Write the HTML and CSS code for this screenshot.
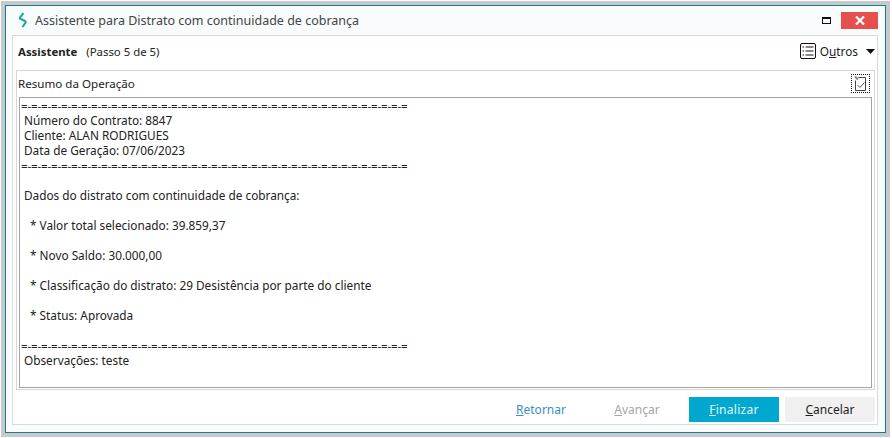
FILE: index.html
```
<!DOCTYPE html>
<html lang="pt">
<head>
<meta charset="utf-8">
<title>Assistente</title>
<link rel="stylesheet" href="styles.css">
</head>
<body>
<div class="window">
  <div class="titlebar">
    <svg class="logo" width="10" height="16" viewBox="0 0 10 16"><path d="M5.500 1 L2 5.500 Q1.500 6.500 3 7.200 L7 9 Q8.200 9.800 7.500 10.800 L4.500 15" fill="none" stroke="#12a5a0" stroke-width="2"/></svg>
    <span class="title">Assistente para Distrato com continuidade de cobrança</span>
    <svg class="maxi" width="9" height="7" viewBox="0 0 9 7"><rect x=".5" y=".5" width="8" height="6" fill="none" stroke="#111"/><rect x="0" y="0" width="9" height="2" fill="#111"/></svg>
    <div class="close"><svg width="10" height="9" viewBox="0 0 10 9"><path d="M1 0.500 L9 8.500 M9 0.500 L1 8.500" stroke="#fff" stroke-width="2.200"/></svg></div>
  </div>
  <div class="panel">
    <div class="head">
      <span class="step"><b>Assistente</b>&nbsp;&nbsp;&nbsp;(Passo 5 de 5)</span>
      <div class="outros">
        <svg width="16" height="16" viewBox="0 0 16 16"><rect x=".5" y=".5" width="15" height="15" rx="1.500" fill="none" stroke="#111"/><path d="M2.500 4h1.500M2.500 8h1.500M2.500 12h1.500M5.500 4h8M5.500 8h8M5.500 12h8" stroke="#111"/></svg>
        <span class="otext">O<u>u</u>tros</span>
        <svg class="caret" width="9" height="5" viewBox="0 0 9 5"><path d="M0 0h9L4.500 5z" fill="#111"/></svg>
      </div>
    </div>
    <div class="section">
      <div class="sechead">
        <span>Resumo da Operação</span>
        <div class="check"><svg width="15" height="17" viewBox="0 0 15 17"><path d="M5.500 2.500H12.500V15.500H2.500V5.500" fill="none" stroke="#444"/><path d="M2 1.500L5 4.500" stroke="#888" stroke-width="2"/><path d="M4.500 10l2.500 2.500 4.500-5" fill="none" stroke="#555"/></svg></div>
      </div>
      <div class="memo">
        <div class="rule">=-=-=-=-=-=-=-=-=-=-=-=-=-=-=-=-=-=-=-=-=-=-=-=-=-=-=-=-=-=-=-=-=-=-=-=-=-=-=</div>
        <p>Número do Contrato: 8847</p>
        <p>Cliente: ALAN RODRIGUES</p>
        <p>Data de Geração: 07/06/2023</p>
        <div class="rule">=-=-=-=-=-=-=-=-=-=-=-=-=-=-=-=-=-=-=-=-=-=-=-=-=-=-=-=-=-=-=-=-=-=-=-=-=-=-=</div>
        <p>&nbsp;</p>
        <p>Dados do distrato com continuidade de cobrança:</p>
        <p>&nbsp;</p>
        <p class="item">* Valor total selecionado: 39.859,37</p>
        <p>&nbsp;</p>
        <p class="item">* Novo Saldo: 30.000,00</p>
        <p>&nbsp;</p>
        <p class="item">* Classificação do distrato: 29 Desistência por parte do cliente</p>
        <p>&nbsp;</p>
        <p class="item">* Status: Aprovada</p>
        <p>&nbsp;</p>
        <div class="rule">=-=-=-=-=-=-=-=-=-=-=-=-=-=-=-=-=-=-=-=-=-=-=-=-=-=-=-=-=-=-=-=-=-=-=-=-=-=-=</div>
        <p>Observações: teste</p>
      </div>
    </div>
    <div class="footer">
      <span class="btn link"><u>R</u>etornar</span>
      <span class="btn off"><u>A</u>vançar</span>
      <span class="btn primary"><u>F</u>inalizar</span>
      <span class="btn cancel"><u>C</u>ancelar</span>
    </div>
  </div>
</div>
</body>
</html>
```
FILE: styles.css
```
* { box-sizing: border-box; }
html, body { margin: 0; height: 100%; }
body {
  background: #fff;
  padding: 1px 2px 1px 1px;
  font-family: "Noto Sans", "Open Sans", sans-serif;
  font-size: 11.5px;
  color: #222;
  overflow: hidden;
}
.window {
  height: 436px;
  background: #f8fcfd;
  border: 4px solid #c9c9c9;
  display: flex;
  flex-direction: column;
  padding: 0 8px 8px 7px;
  box-shadow: inset 0 0 0 1px #0f7f95;
}
.titlebar {
  height: 30px;
  flex: none;
  display: flex;
  align-items: center;
  padding-left: 6px;
}
.logo { margin-right: 7px; }
.title { font-size: 12.5px; color: #444; flex: 1; }
.maxi { margin-right: 10px; }
.close {
  width: 37px;
  height: 17px;
  background: #e5504f;
  display: flex;
  align-items: center;
  justify-content: center;
}
.panel {
  flex: 1;
  background: #fff;
  border: 1px solid #d9d9d9;
  display: flex;
  flex-direction: column;
  padding: 0 2px 0 3px;
}
.head {
  height: 34px;
  flex: none;
  display: flex;
  align-items: center;
  justify-content: space-between;
  padding: 0 0 4px 2px;
}
.step { font-size: 11.4px; }
.step b { font-weight: 700; }
.outros { display: flex; align-items: center; gap: 4px; font-size: 11.8px; }
.otext { margin-right: 4px; }
.section {
  flex: 1;
  border: 1px solid #d6d6d6;
  padding: 0 2px 1px;
  display: flex;
  flex-direction: column;
}
.sechead {
  height: 26px;
  flex: none;
  display: flex;
  align-items: center;
  justify-content: space-between;
  font-size: 11.6px;
  padding-bottom: 2px;
  margin-left: -1px;
}
.check {
  width: 19px;
  height: 19px;
  border: 1px dotted #111;
  display: flex;
  align-items: center;
  justify-content: center;
  margin-right: 2px;
}
.memo {
  flex: 1;
  border: 1px solid #a3a3a3;
  background: #fff;
  padding-left: 1px;
  line-height: 15px;
  font-size: 11.8px;
  overflow: hidden;
}
.memo p { margin: 0; padding-left: 3px; }
.memo .item { padding-left: 9px; }
.rule { font-size: 11.5px; letter-spacing: -.14px; white-space: nowrap; }
.footer {
  height: 34px;
  flex: none;
  display: flex;
  align-items: flex-start;
  justify-content: flex-end;
  padding-top: 7px;
  font-size: 12px;
}
.btn {
  height: 25px;
  display: flex;
  align-items: center;
  justify-content: center;
}
.btn u { text-underline-offset: 1px; }
.link { width: 96px; color: #3a8fc0; }
.off { width: 96px; color: #a5a5a5; margin-right: 4px; }
.primary { width: 90px; background: #00a8d0; color: #e4f7fb; letter-spacing: .3px; }
.cancel { width: 90px; background: #f0f0f0; color: #222; margin-left: 6px; }
```
